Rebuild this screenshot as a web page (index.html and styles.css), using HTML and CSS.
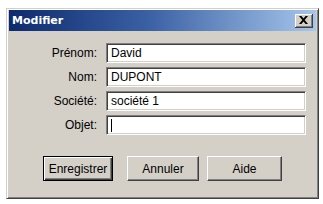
FILE: index.html
```html
<!DOCTYPE html>
<html lang="fr">
<head>
    <meta charset="UTF-8">
    <title>Modifier</title>
    <link rel="stylesheet" href="styles.css">
</head>
<body>
    <div class="dialog">
        <div class="title-bar">
            <span class="title">Modifier</span>
            <span class="close-btn">
                <svg width="9" height="8" viewBox="0 0 9 8">
                    <path d="M0 0h2.4l2.1 2.6L6.6 0H9L5.7 4 9 8H6.6L4.5 5.4 2.4 8H0l3.3-4z" fill="#000"/>
                </svg>
            </span>
        </div>
        <form class="fields">
            <label for="prenom">Prénom:</label>
            <div class="field" id="prenom">David</div>
            <label for="nom">Nom:</label>
            <div class="field" id="nom">DUPONT</div>
            <label for="societe">Société:</label>
            <div class="field" id="societe">société 1</div>
            <label for="objet">Objet:</label>
            <div class="field" id="objet"><span class="caret"></span></div>
        </form>
        <div class="buttons">
            <button type="button" class="default">Enregistrer</button>
            <button type="button">Annuler</button>
            <button type="button" class="wide">Aide</button>
        </div>
    </div>
</body>
</html>
```

FILE: styles.css
```css
body {
    margin: 0;
    background-color: #ffffff;
    font-family: "Liberation Sans", Arial, sans-serif;
    font-size: 12px;
}
.dialog {
    margin: 8px 4px 0 6px;
    height: 191px;
    box-sizing: border-box;
    background-color: #d4d0c8;
    border-top: 1px solid #d4d0c8;
    border-left: 1px solid #d4d0c8;
    border-right: 1px solid #404040;
    border-bottom: 1px solid #404040;
    box-shadow: inset 1px 1px 0 #ffffff, inset -1px -1px 0 #808080;
    padding: 1px 2px 2px 2px;
}
.title-bar {
    height: 21px;
    display: flex;
    align-items: center;
    justify-content: space-between;
    padding: 0 3px 0 3px;
    background: linear-gradient(to right, #0e2a6e, #3a60a4 45%, #a6c6ec);
}
.title {
    color: #ffffff;
    font-family: "DejaVu Sans", Verdana, sans-serif;
    font-weight: bold;
    font-size: 11px;
}
.close-btn {
    width: 17px;
    height: 13px;
    display: flex;
    align-items: center;
    justify-content: center;
    background-color: #d4d0c8;
    border-right: 1px solid #404040;
    border-bottom: 1px solid #404040;
    box-shadow: inset 1px 1px 0 #ffffff, inset -1px -1px 0 #808080;
}
.fields {
    display: grid;
    grid-template-columns: 88px 200px;
    column-gap: 9px;
    row-gap: 4px;
    margin: 12px 0 0 0;
}
.fields label {
    text-align: right;
    align-self: center;
    color: #000000;
}
.field {
    height: 20px;
    box-sizing: border-box;
    background-color: #ffffff;
    border-top: 1px solid #808080;
    border-left: 1px solid #808080;
    border-right: 1px solid #ffffff;
    border-bottom: 1px solid #ffffff;
    box-shadow: inset 1px 1px 0 #404040, inset -1px -1px 0 #d4d0c8;
    padding: 2px 4px;
    line-height: 15px;
    display: flex;
    align-items: center;
}
.caret {
    display: inline-block;
    width: 1px;
    height: 13px;
    background-color: #000000;
}
.buttons {
    display: flex;
    gap: 8px;
    margin: 21px 0 0 34px;
}
button {
    font-family: "Liberation Sans", Arial, sans-serif;
    font-size: 12px;
    color: #000000;
    width: 72px;
    height: 25px;
    padding: 0;
    background-color: #d4d0c8;
    border-top: 1px solid #ffffff;
    border-left: 1px solid #ffffff;
    border-right: 1px solid #404040;
    border-bottom: 1px solid #404040;
    box-shadow: inset -1px -1px 0 #808080;
}
button.default {
    width: 70px;
    margin-right: 6px;
    border: 1px solid #000000;
    box-shadow: inset 1px 1px 0 #ffffff, inset -1px -1px 0 #404040, inset -2px -2px 0 #808080;
}
button.wide {
    width: 75px;
}
```
